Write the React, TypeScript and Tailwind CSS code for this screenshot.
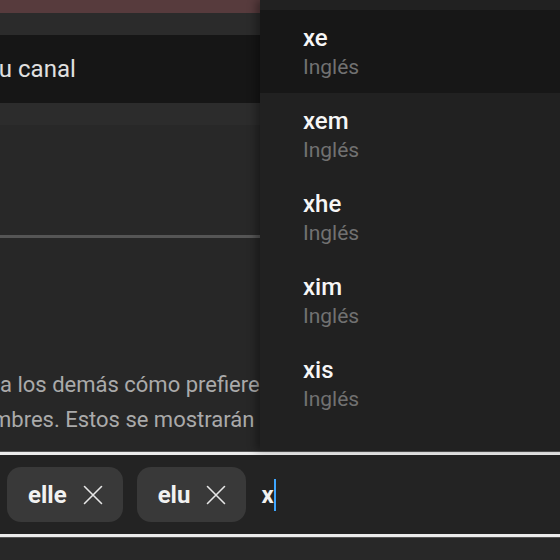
import React from "react";

const options = ["xe", "xem", "xhe", "xim", "xis"];

function CloseIcon() {
  return (
    <svg width="20" height="20" viewBox="0 0 20 20" fill="none" stroke="#e6e6e6" strokeWidth="1.6" strokeLinecap="round">
      <path d="M1.5 1.5 L18.5 18.5 M18.5 1.5 L1.5 18.5" />
    </svg>
  );
}

function Chip({ label }: { label: string }) {
  return (
    <div className="flex items-center h-[55px] pl-[21px] pr-[20px] gap-[16px] rounded-[14px] bg-[#393939]">
      <span className="text-[24px] font-bold text-[#f1f1f1] leading-none">{label}</span>
      <CloseIcon />
    </div>
  );
}

export default function App() {
  return (
    <div className="relative w-[560px] h-[560px] overflow-hidden bg-[#282828] font-['Roboto',sans-serif]">
      {/* Page behind the menu */}
      <div className="flex flex-col w-full">
        <div className="h-[13px] bg-[#573b3d]" />
        <div className="h-[22px] bg-[#2b2b2b]" />
        <div className="h-[68px] w-[260px] bg-[#161616] flex items-center whitespace-nowrap overflow-hidden">
          <span className="-ml-[9px] text-[24px] text-[#e0e0e0]">tu canal</span>
        </div>
        <div className="h-[22px] bg-[#2c2c2c]" />
        <div className="h-[110px] bg-[#282828]" />
        <div className="h-[3px] bg-[#555555]" />
        <div className="h-[129px] bg-[#272727]" />
        <div className="w-[260px] overflow-hidden bg-[#272727] text-[22px] leading-[35px] text-[#aaaaaa] whitespace-nowrap">
          <p>a los demás cómo prefieres que se refieran a ti</p>
          <p className="-ml-[8px]">mbres. Estos se mostrarán en tu canal</p>
        </div>
        <div className="h-[15px] bg-[#272727]" />

        {/* Chip input */}
        <div className="h-[85px] border-y-[3px] border-[#ececec] bg-[#232323] flex items-center pl-[7px] gap-[14px] shadow-[0_0_0_1px_#555]">
          <Chip label="elle" />
          <Chip label="elu" />
          <div className="flex items-center ml-[1px]">
            <span className="text-[24px] font-bold text-[#f1f1f1] leading-none">x</span>
            <span className="w-[2px] h-[32px] bg-[#3ea6ff]" />
          </div>
        </div>
        <div className="flex-1 h-[30px] bg-[#2a2a2a]" />
      </div>

      {/* Suggestions menu */}
      <div className="absolute z-10 left-[260px] top-0 w-[320px] h-[450px] bg-[#212121] pt-[10px] shadow-[-4px_0_8px_rgba(0,0,0,0.35)]">
        {options.map((o, i) => (
          <div
            key={o}
            className={`h-[83px] pl-[43px] pt-[2px] flex flex-col justify-center ${i === 0 ? "bg-[#171717]" : ""}`}
          >
            <span className="text-[24px] font-medium leading-[28px] text-[#f6f6f6]">{o}</span>
            <span className="text-[21px] leading-[30px] text-[#717171]">Inglés</span>
          </div>
        ))}
      </div>
    </div>
  );
}
